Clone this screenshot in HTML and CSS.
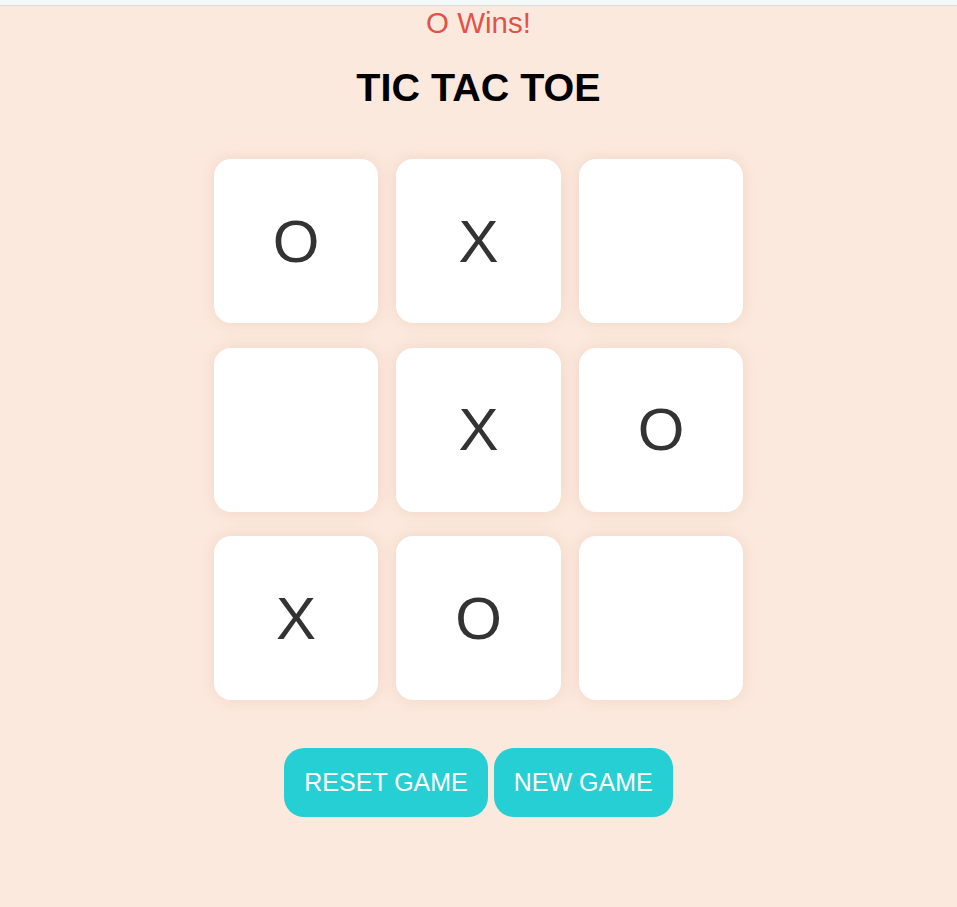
FILE: index.html
```html
<!DOCTYPE html>
<html>
<head>
<meta charset="utf-8">
<title>Tic Tac Toe</title>
<link rel="stylesheet" href="styles.css">
</head>
<body>
<div class="topbar"></div>
<main class="game">
  <div class="status">O Wins!</div>
  <h1 class="title">TIC TAC TOE</h1>
  <div class="board">
    <div class="cell">O</div>
    <div class="cell">X</div>
    <div class="cell"></div>
    <div class="cell"></div>
    <div class="cell">X</div>
    <div class="cell">O</div>
    <div class="cell">X</div>
    <div class="cell">O</div>
    <div class="cell"></div>
  </div>
  <div class="actions">
    <button class="btn">RESET GAME</button>
    <button class="btn">NEW GAME</button>
  </div>
</main>
</body>
</html>
```
FILE: styles.css
```css
html, body {
  margin: 0;
  padding: 0;
}
body {
  background: #fce9de;
  font-family: "Liberation Sans", Arial, sans-serif;
  min-height: 907px;
}
.topbar {
  height: 5px;
  background: #f3f8f8;
  border-bottom: 1px solid #dcdcdc;
}
.game {
  display: flex;
  flex-direction: column;
  align-items: center;
}
.status {
  font-size: 29.5px;
  line-height: 33px;
  color: #e0534a;
}
.title {
  margin: 26px 0 0;
  font-size: 39.5px;
  line-height: 45px;
  font-weight: bold;
  color: #000;
}
.board {
  margin-top: 49px;
  display: grid;
  grid-template-columns: repeat(3, 164.5px);
  grid-auto-rows: 164px;
  column-gap: 18px;
  row-gap: 24.5px;
}
.cell {
  background: #fff;
  border-radius: 17px;
  box-shadow: 0 0 16px rgba(214, 170, 140, 0.3);
  display: flex;
  align-items: center;
  justify-content: center;
  font-size: 60px;
  color: #333;
}
.actions {
  margin-top: 48px;
  display: flex;
  gap: 6px;
}
.btn {
  font-family: "Liberation Sans", Arial, sans-serif;
  font-size: 25px;
  line-height: 29px;
  color: #fff;
  background: #26cfd3;
  border: none;
  border-radius: 20px;
  padding: 20px 20px;
}
```
